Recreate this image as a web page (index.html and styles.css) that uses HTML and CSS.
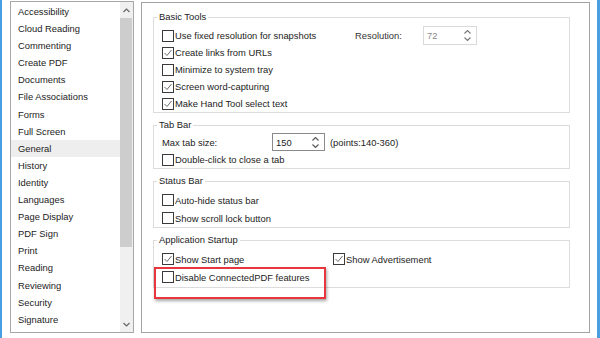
FILE: index.html
```html
<!DOCTYPE html>
<html lang="en">
<head>
    <meta charset="UTF-8">
    <meta name="viewport" content="width=device-width, initial-scale=1.0">
    <title>Preferences - General</title>
    <link rel="stylesheet" href="styles.css">
</head>
<body>

<div class="frame">

    <!-- Category list -->
    <div class="nav">
        <ul class="nav-list">
            <li>Accessibility</li>
            <li>Cloud Reading</li>
            <li>Commenting</li>
            <li>Create PDF</li>
            <li>Documents</li>
            <li>File Associations</li>
            <li>Forms</li>
            <li>Full Screen</li>
            <li class="selected">General</li>
            <li>History</li>
            <li>Identity</li>
            <li>Languages</li>
            <li>Page Display</li>
            <li>PDF Sign</li>
            <li>Print</li>
            <li>Reading</li>
            <li>Reviewing</li>
            <li>Security</li>
            <li>Signature</li>
        </ul>
        <div class="scrollbar">
            <div class="scroll-arrow">
                <svg width="7" height="5" viewBox="0 0 7 5"><polyline points="0.5,4 3.5,1 6.5,4" fill="none" stroke="#666" stroke-width="1.2"/></svg>
            </div>
            <div class="scroll-thumb"></div>
            <div class="scroll-space"></div>
            <div class="scroll-arrow">
                <svg width="7" height="5" viewBox="0 0 7 5"><polyline points="0.5,1 3.5,4 6.5,1" fill="none" stroke="#666" stroke-width="1.2"/></svg>
            </div>
        </div>
    </div>

    <!-- Settings page -->
    <div class="main">

        <div class="group">
            <div class="group-title">Basic Tools</div>
            <div class="rows">
                <div class="row">
                    <label class="check wide"><span class="box"></span>Use fixed resolution for snapshots</label>
                    <span class="field-label">Resolution:</span>
                    <div class="spin disabled">
                        <span class="spin-value">72</span>
                        <span class="spin-arrows">
                            <svg width="7" height="4" viewBox="0 0 7 4"><polyline points="0.5,3.5 3.5,0.5 6.5,3.5" fill="none" stroke="#777" stroke-width="1.1"/></svg>
                            <svg width="7" height="4" viewBox="0 0 7 4"><polyline points="0.5,0.5 3.5,3.5 6.5,0.5" fill="none" stroke="#777" stroke-width="1.1"/></svg>
                        </span>
                    </div>
                </div>
                <div class="row">
                    <label class="check"><span class="box"><svg width="10" height="10" viewBox="0 0 10 10"><polyline points="1.5,5 4,7.5 8.5,2" fill="none" stroke="#6b6b6b" stroke-width="1"/></svg></span>Create links from URLs</label>
                </div>
                <div class="row">
                    <label class="check"><span class="box"></span>Minimize to system tray</label>
                </div>
                <div class="row">
                    <label class="check"><span class="box"><svg width="10" height="10" viewBox="0 0 10 10"><polyline points="1.5,5 4,7.5 8.5,2" fill="none" stroke="#6b6b6b" stroke-width="1"/></svg></span>Screen word-capturing</label>
                </div>
                <div class="row">
                    <label class="check"><span class="box"><svg width="10" height="10" viewBox="0 0 10 10"><polyline points="1.5,5 4,7.5 8.5,2" fill="none" stroke="#6b6b6b" stroke-width="1"/></svg></span>Make Hand Tool select text</label>
                </div>
            </div>
        </div>

        <div class="group">
            <div class="group-title">Tab Bar</div>
            <div class="rows tab-rows">
                <div class="row spin-row">
                    <span class="tab-label">Max tab size:</span>
                    <div class="spin">
                        <span class="spin-value">150</span>
                        <span class="spin-arrows">
                            <svg width="7" height="4" viewBox="0 0 7 4"><polyline points="0.5,3.5 3.5,0.5 6.5,3.5" fill="none" stroke="#555" stroke-width="1.1"/></svg>
                            <svg width="7" height="4" viewBox="0 0 7 4"><polyline points="0.5,0.5 3.5,3.5 6.5,0.5" fill="none" stroke="#555" stroke-width="1.1"/></svg>
                        </span>
                    </div>
                    <span class="hint">(points:140-360)</span>
                </div>
                <div class="row">
                    <label class="check"><span class="box"></span>Double-click to close a tab</label>
                </div>
            </div>
        </div>

        <div class="group tall">
            <div class="group-title">Status Bar</div>
            <div class="rows">
                <div class="row">
                    <label class="check"><span class="box"></span>Auto-hide status bar</label>
                </div>
                <div class="row">
                    <label class="check"><span class="box"></span>Show scroll lock button</label>
                </div>
            </div>
        </div>

        <div class="group tall last">
            <div class="group-title">Application Startup</div>
            <div class="rows">
                <div class="row">
                    <label class="check half"><span class="box"><svg width="10" height="10" viewBox="0 0 10 10"><polyline points="1.5,5 4,7.5 8.5,2" fill="none" stroke="#6b6b6b" stroke-width="1"/></svg></span>Show Start page</label>
                    <label class="check"><span class="box"><svg width="10" height="10" viewBox="0 0 10 10"><polyline points="1.5,5 4,7.5 8.5,2" fill="none" stroke="#6b6b6b" stroke-width="1"/></svg></span>Show Advertisement</label>
                </div>
                <div class="row">
                    <label class="check"><span class="box"></span>Disable ConnectedPDF features</label>
                </div>
            </div>
        </div>

        <!-- highlight drawn over the option -->
        <div class="callout"></div>
    </div>

</div>

</body>
</html>
```

FILE: styles.css
```css
body {
    margin: 0;
    font-family: "Liberation Sans", Arial, sans-serif;
    font-size: 9.4px;
    color: #1c1c1c;
    background: #fff;
    overflow: hidden;
}
.frame {
    display: flex;
    width: 600px;
    height: 338px;
    box-sizing: border-box;
    border-left: 2px solid #4a9fe3;
    border-right: 3px solid #4a9fe3;
    padding: 1px 0 0 8px;
}

/* left category list */
.nav {
    display: flex;
    width: 124px;
    height: 332px;
    box-sizing: border-box;
    border: 1px solid #a7a7a7;
}
.nav-list {
    flex: 1;
    list-style: none;
    margin: 0;
    padding: 1px 0 0 0;
}
.nav-list li {
    height: 17.1px;
    line-height: 17.1px;
    padding-left: 7px;
}
.nav-list li.selected {
    background: #eeeeee;
}
.scrollbar {
    display: flex;
    flex-direction: column;
    width: 13px;
    background: #f0f0f0;
}
.scroll-arrow {
    height: 16px;
    display: flex;
    align-items: center;
    justify-content: center;
}
.scroll-thumb {
    height: 229px;
    margin-right: 1px;
    background: #cdcdcd;
}
.scroll-space {
    flex: 1;
}

/* settings page */
.main {
    position: relative;
    width: 449px;
    height: 331px;
    box-sizing: border-box;
    margin: 1px 0 0 7px;
    border: 1px solid #a3a3a3;
    padding: 14px 19px 0 11px;
}
.group {
    border: 1px solid #dcdcdc;
    padding: 0 0 0 8px;
    margin-bottom: 12px;
}
.group-title {
    width: fit-content;
    line-height: 14px;
    margin: -8px 0 0 -5px;
    padding: 0 2px;
    background: #fff;
}
.rows {
    padding-top: 3px;
}
.tab-rows {
    padding-top: 1px;
}
.group.last .rows {
    padding-bottom: 1px;
}
.row {
    display: flex;
    align-items: center;
    height: 17px;
}
.group.tall .row {
    height: 18px;
}
.spin-row {
    height: 18px;
}
.check {
    display: flex;
    align-items: center;
}
.check.wide {
    width: 193px;
}
.check.half {
    width: 171px;
}
.box {
    display: flex;
    align-items: center;
    justify-content: center;
    width: 12px;
    height: 12px;
    box-sizing: border-box;
    border: 1px solid #3a3a3a;
    background: #fff;
    margin-right: 1px;
}
.field-label {
    width: 68px;
    color: #333;
}
.tab-label {
    width: 110px;
}
.spin {
    display: flex;
    align-items: center;
    width: 54px;
    height: 19px;
    box-sizing: border-box;
    border: 1px solid #8a8a8a;
    background: #fff;
}
.spin-row .spin {
    width: 53px;
    height: 18px;
}
.spin.disabled {
    border-color: #dadada;
    color: #8c8c8c;
}
.spin-value {
    flex: 1;
    padding-left: 3px;
}
.spin-arrows {
    display: flex;
    flex-direction: column;
    gap: 3px;
    width: 12px;
}
.hint {
    margin-left: 5px;
}

/* red highlight box */
.callout {
    position: absolute;
    left: 12px;
    top: 264px;
    width: 172px;
    height: 32px;
    box-sizing: border-box;
    border: 2px solid #e8363f;
    box-shadow: 1px 2px 3px rgba(0, 0, 0, 0.35);
}
```
